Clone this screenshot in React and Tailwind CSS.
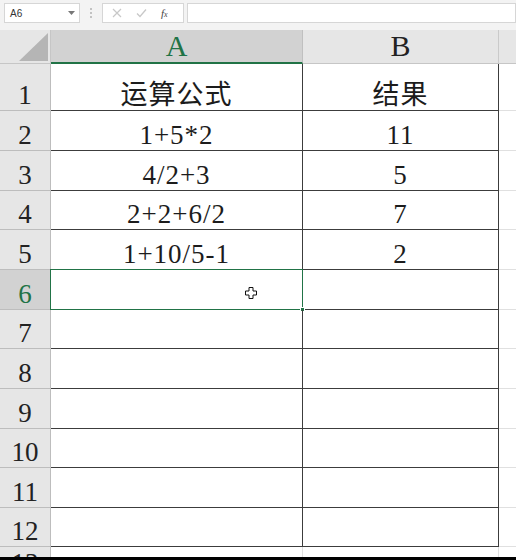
import React from 'react';

const serif = { fontFamily: '"Liberation Serif", "Noto Sans CJK SC", serif' };

const rows = [
  { n: '1', h: 'h-[47px]', a: '运算公式', b: '结果' },
  { n: '2', h: 'h-[40px]', a: '1+5*2', b: '11' },
  { n: '3', h: 'h-[40px]', a: '4/2+3', b: '5' },
  { n: '4', h: 'h-[39px]', a: '2+2+6/2', b: '7' },
  { n: '5', h: 'h-[40px]', a: '1+10/5-1', b: '2' },
  { n: '6', h: 'h-[40px]', a: '', b: '', sel: true },
  { n: '7', h: 'h-[39px]', a: '', b: '' },
  { n: '8', h: 'h-[40px]', a: '', b: '' },
  { n: '9', h: 'h-[40px]', a: '', b: '' },
  { n: '10', h: 'h-[39px]', a: '', b: '' },
  { n: '11', h: 'h-[40px]', a: '', b: '' },
  { n: '12', h: 'h-[39px]', a: '', b: '' },
];

function Toolbar() {
  return (
    <div className="h-[30px] bg-[#f3f3f3] flex items-start pt-[3px] px-[4px] shrink-0">
      {/* name box */}
      <div className="w-[76px] h-[20px] bg-white border border-[#d6d6d6] flex items-center justify-between pl-[5px] pr-[4px]">
        <span className="text-[10px] text-[#333]" style={{ fontFamily: '"Liberation Sans", sans-serif' }}>A6</span>
        <svg width="7" height="4" viewBox="0 0 7 4"><path d="M0 0h7L3.5 4z" fill="#777" /></svg>
      </div>
      <div className="w-[22px] flex flex-col items-center gap-[2px] pt-[5px]">
        <span className="w-[2px] h-[2px] bg-[#c2c2c2]" />
        <span className="w-[2px] h-[2px] bg-[#c2c2c2]" />
        <span className="w-[2px] h-[2px] bg-[#c2c2c2]" />
      </div>
      {/* cancel / enter / fx */}
      <div className="w-[82px] h-[20px] bg-white border border-[#d6d6d6] flex items-center pl-[9px] gap-[14px]">
        <svg width="10" height="10" viewBox="0 0 10 10"><path d="M1 1l8 8M9 1l-8 8" stroke="#c8c8c8" strokeWidth="1.2" /></svg>
        <svg width="11" height="10" viewBox="0 0 11 10"><path d="M1 5.5l3 3L10 1.5" stroke="#c8c8c8" strokeWidth="1.3" fill="none" /></svg>
        <span className="text-[11px] italic text-[#444] leading-none" style={{ fontFamily: '"Liberation Serif", serif' }}>f<span className="text-[8px]">x</span></span>
      </div>
      <div className="flex-1 h-[20px] bg-white border border-[#d6d6d6] ml-[3px] -mr-[4px]" />
    </div>
  );
}

function HeaderRow() {
  return (
    <div className="h-[34px] flex bg-[#e6e6e6] shrink-0" style={serif}>
      <div className="w-[51px] shrink-0 border-b border-r border-[#c6c6c6] flex items-end justify-end pr-[2px] pb-[2px]">
        <svg width="29" height="28" viewBox="0 0 29 28"><path d="M29 0V28H0z" fill="#b5b5b5" /></svg>
      </div>
      <div className="w-[252px] shrink-0 bg-[#d2d2d2] border-b-2 border-r border-b-[#217346] border-r-[#c0c0c0] flex items-end justify-center text-[30px] leading-none text-[#217346] pb-[1px]">
        A
      </div>
      <div className="w-[196px] shrink-0 border-b border-r border-b-[#c6c6c6] border-r-[#cacaca] flex items-end justify-center text-[30px] leading-none text-[#222] pb-[2px]">
        B
      </div>
      <div className="flex-1 border-b border-[#c6c6c6]" />
    </div>
  );
}

function Row({ r }) {
  return (
    <div className={`${r.h} flex shrink-0`} style={serif}>
      <div
        className={`w-[51px] shrink-0 border-b border-r border-[#bdbdbd] flex items-end justify-center pb-px text-[27px] leading-none ${
          r.sel ? 'bg-[#d2d2d2] text-[#217346]' : 'bg-[#e6e6e6] text-[#222]'
        }`}
      >
        {r.n}
      </div>
      <div className="relative w-[252px] shrink-0 border-b border-r border-[#3c3c3c] flex items-end justify-center pb-px text-[27px] leading-none tracking-[1px] text-[#1c1c1c]">
        {r.a}
        {r.sel && (
          <>
            <div className="absolute -top-px -left-px -right-px -bottom-px border border-[#217346]" />
            <div className="absolute -right-[3px] -bottom-[3px] w-[5px] h-[5px] bg-[#217346] border border-white" />
            <svg className="absolute left-[194px] top-[17px]" width="12" height="12" viewBox="0 0 12 12">
              <path d="M4 0.5h4v3.5h3.5v4H8v3.5H4V8H0.5V4H4z" fill="#fff" stroke="#111" strokeWidth="1" />
            </svg>
          </>
        )}
      </div>
      <div className="w-[196px] shrink-0 border-b border-r border-[#3c3c3c] flex items-end justify-center pb-px text-[27px] leading-none tracking-[1px] text-[#1c1c1c]">
        {r.b}
      </div>
      <div className="flex-1 border-b border-[#e0e0e0]" />
    </div>
  );
}

export default function App() {
  return (
    <div className="w-[516px] h-[560px] bg-white flex flex-col overflow-hidden">
      <Toolbar />
      <HeaderRow />
      {rows.map((r) => (
        <Row key={r.n} r={r} />
      ))}
      {/* partially visible row 13 */}
      <div className="flex-1 flex overflow-hidden" style={serif}>
        <div className="w-[51px] shrink-0 bg-[#e6e6e6] border-r border-[#bdbdbd] flex justify-center pt-[3px] text-[27px] leading-none text-[#222]">
          13
        </div>
        <div className="w-[252px] shrink-0 border-r border-[#e0e0e0]" />
        <div className="w-[196px] shrink-0 border-r border-[#e0e0e0]" />
        <div className="flex-1" />
      </div>
      <div className="h-[3px] bg-black shrink-0" />
    </div>
  );
}
